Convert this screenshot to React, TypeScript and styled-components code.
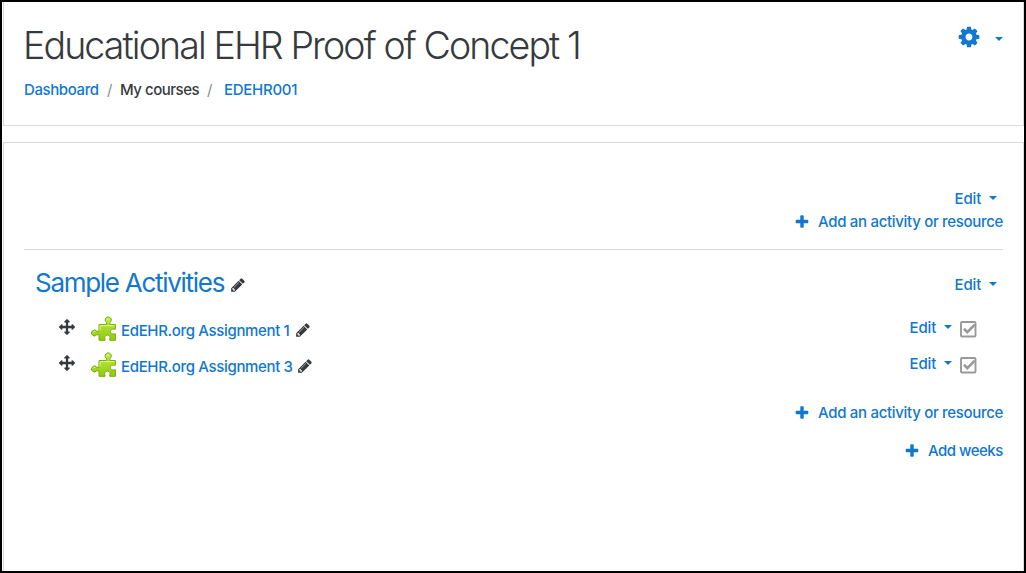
import React from "react";
import styled, { createGlobalStyle } from "styled-components";

const GlobalStyle = createGlobalStyle`
  * { box-sizing: border-box; }
  html, body { margin: 0; padding: 0; background: #fff; }
  body {
    font-family: Inter, "Liberation Sans", sans-serif;
    font-size: 15px;
    line-height: 22px;
    color: #373a3c;
    overflow: hidden;
  }
`;

const BLUE = "#1177d1";

const Frame = styled.div`
  width: 1026px;
  height: 573px;
  border: 2px solid #000;
  padding: 0 0 0 1px;
  display: flex;
  flex-direction: column;
  gap: 16px;
  overflow: hidden;
`;

const HeaderCard = styled.header`
  height: 124px;
  flex: none;
  border: 1px solid #dadada;
  border-top: 0;
  padding: 21px 20px 0 20px;
  display: flex;
  justify-content: space-between;
`;

const ContentCard = styled.main`
  flex: 1;
  border: 1px solid #dadada;
  border-bottom: 0;
  padding: 45px 20px 0 20px;
`;

const Title = styled.h1`
  margin: 0 0 0 -1px;
  padding-top: 1px;
  font-size: 37.5px;
  line-height: 44px;
  font-weight: 350;
  letter-spacing: -1.88px;
  white-space: nowrap;
`;

const Crumbs = styled.nav`
  display: flex;
  margin-top: 11px;
  white-space: nowrap;
`;

const Text = styled.span<{ $width: number; $spacing?: number }>`
  display: block;
  flex: none;
  width: ${(p) => p.$width}px;
  letter-spacing: ${(p) => p.$spacing ?? -0.28}px;
  font-weight: 450;
  white-space: nowrap;
`;

const Link = styled(Text).attrs({ as: "a" })`
  color: ${BLUE};
  font-weight: 500;
`;

const Slash = styled.span<{ $after: number }>`
  color: #868e96;
  width: 5px;
  margin: 0 ${(p) => p.$after}px 0 8px;
`;

const Settings = styled.div`
  display: flex;
  align-items: center;
  height: 28px;
  gap: 14px;
  color: ${BLUE};
`;

const Caret = styled.i<{ $shift?: number }>`
  width: 0;
  height: 0;
  margin-top: ${(p) => p.$shift ?? -2}px;
  border: 4px solid transparent;
  border-top-color: ${BLUE};
  border-bottom: 0;
`;

const Row = styled.div<{ $height: number; $right?: number }>`
  display: flex;
  align-items: center;
  justify-content: flex-end;
  height: ${(p) => p.$height}px;
  padding-right: ${(p) => p.$right ?? 0}px;
`;

const EditButton = styled.div`
  display: flex;
  align-items: center;
  gap: 8px;
`;

const AddButton = styled.div`
  display: flex;
  align-items: center;
  gap: 8px;
  color: ${BLUE};
`;

const Section = styled.section`
  border-top: 1px solid #dadada;
  margin-top: 15px;
  padding-top: 15px;
`;

const SectionHeader = styled.div`
  display: flex;
  justify-content: space-between;
  height: 36px;
  padding: 0 6px 0 11px;
`;

const SectionEdit = styled.div`
  display: flex;
  padding-top: 3px;
`;

const Heading = styled.div`
  display: flex;
  align-items: center;
  color: #373a3c;
`;

const SectionTitle = styled.h3`
  margin: 0;
  width: 195px;
  color: ${BLUE};
  font-size: 26px;
  line-height: 32px;
  font-weight: 400;
  letter-spacing: -1.28px;
  white-space: nowrap;
`;

const Activities = styled.div`
  padding: 10px 27px 0 35px;
`;

const Activity = styled.div`
  display: flex;
  align-items: center;
  height: 36px;
`;

const ActivityName = styled.div`
  display: flex;
  align-items: center;
  flex: 1;
  gap: 4px;
  padding: 4px 0 0 4px;
`;

const ActivityIcon = styled.div`
  margin: -1px 0 0 16px;
`;

const ActivityActions = styled.div`
  display: flex;
  align-items: center;
  gap: 8px;
  margin: -2px -1px 0 0;
`;

const Completion = styled.div`
  display: flex;
  padding-top: 2px;
`;

const Svg = styled.svg<{ $shift?: number }>`
  display: block;
  flex: none;
  margin-top: ${(p) => p.$shift ?? 0}px;
`;

const PATHS = {
  cog: "M1152 896q0-106-75-181t-181-75-181 75-75 181 75 181 181 75 181-75 75-181zm512-109v222q0 12-8 23t-20 13l-185 28q-19 54-39 91 35 50 107 138 10 12 10 25t-9 23q-27 37-99 108t-94 71q-12 0-26-9l-138-108q-44 23-91 38-16 136-29 186-7 28-36 28h-222q-14 0-24.5-8.5t-11.5-21.5l-28-184q-49-16-90-37l-141 107q-10 9-25 9-14 0-25-11-126-114-165-168-7-10-7-23 0-12 8-23 15-21 51-66.5t54-70.5q-27-50-41-99l-183-27q-13-2-21-12.5t-8-23.5v-222q0-12 8-23t19-13l186-28q14-46 39-92-40-57-107-138-10-12-10-24 0-10 9-23 26-36 98.5-107.5t94.5-71.5q13 0 26 10l138 107q44-23 91-38 16-136 29-186 7-28 36-28h222q14 0 24.5 8.5t11.5 21.5l28 184q49 16 90 37l142-107q9-9 24-9 13 0 25 10 129 119 165 170 7 8 7 22 0 12-8 23-15 21-51 66.5t-54 70.5q26 50 41 98l183 28q13 2 21 12.5t8 23.5z",
  pencil:
    "M491 1536l91-91-235-235-91 91v107h128v128h107zm523-928q0-22-22-22-10 0-17 7l-542 542q-7 7-7 17 0 22 22 22 10 0 17-7l542-542q7-7 7-17zm-54-192l416 416-832 832h-416v-416zm683 96q0 53-37 90l-166 166-416-416 166-165q36-38 90-38 53 0 91 38l235 234q37 39 37 91z",
  move: "M1792 896q0 26-19 45l-256 256q-19 19-45 19t-45-19-19-45v-128h-384v384h128q26 0 45 19t19 45-19 45l-256 256q-19 19-45 19t-45-19l-256-256q-19-19-19-45t19-45 45-19h128v-384h-384v128q0 26-19 45t-45 19-45-19l-256-256q-19-19-19-45t19-45l256-256q19-19 45-19t45 19 19 45v128h384v-384h-128q-26 0-45-19t-19-45 19-45l256-256q19-19 45-19t45 19l256 256q19 19 19 45t-19 45-45 19h-128v384h384v-128q0-26 19-45t45-19 45 19l256 256q19 19 19 45z",
  plus: "M1600 736v192q0 40-28 68t-68 28h-416v416q0 40-28 68t-68 28h-192q-40 0-68-28t-28-68v-416h-416q-40 0-68-28t-28-68v-192q0-40 28-68t68-28h416v-416q0-40 28-68t68-28h192q40 0 68 28t28 68v416h416q40 0 68 28t28 68z",
};

function Icon({ name, size = 16, shift }: { name: keyof typeof PATHS; size?: number; shift?: number }) {
  return (
    <Svg width={size} height={size} viewBox="0 0 1792 1792" fill="currentColor" $shift={shift}>
      <path d={PATHS[name]} />
    </Svg>
  );
}

function Puzzle() {
  return (
    <Svg width="26" height="26" viewBox="0 0 26 26">
      <defs>
        <linearGradient id="leaf" x1="0" y1="0" x2="0" y2="1">
          <stop offset="0" stopColor="#c3ea4a" />
          <stop offset="1" stopColor="#8fcb0c" />
        </linearGradient>
      </defs>
      <path
        d="M8 8.5H15.6V6.6A3.1 3.1 0 1 1 18.9 6.6V8.5H24.4V13.2H23.2A2.6 2.6 0 1 0 23.2 17.8H24.4V24.3H18.8V23A2.7 2.7 0 1 0 14 23V24.3H8V18.7H5.8A2.9 2.9 0 1 1 5.8 15.3H8Z"
        fill="url(#leaf)"
        stroke="#78ad0d"
        strokeWidth="1"
      />
      <path d="M9.1 14.5V9.6H23.4M15.6 4.2A1.6 1.6 0 0 1 18.6 3.6M2 16.6A1.7 1.7 0 0 1 4.4 15.6" fill="none" stroke="#def58f" />
    </Svg>
  );
}

function Tick() {
  return (
    <Svg width="17" height="17" viewBox="0 0 17 17" fill="none" stroke="#999">
      <rect x="1" y="1" width="14.5" height="14.5" rx="1" strokeWidth="1.9" />
      <path d="M4 7.8L7.3 11.1L14.8 3.6" strokeWidth="2.7" />
    </Svg>
  );
}

function Edit() {
  return (
    <EditButton>
      <Link $width={26.5} $spacing={-0.15}>
        Edit
      </Link>
      <Caret />
    </EditButton>
  );
}

function Add({ label, width, spacing = -0.31 }: { label: string; width: number; spacing?: number }) {
  return (
    <AddButton>
      <Icon name="plus" shift={-1} />
      <Link $width={width} $spacing={spacing}>
        {label}
      </Link>
    </AddButton>
  );
}

function ActivityRow({ label, width }: { label: string; width: number }) {
  return (
    <Activity>
      <Icon name="move" shift={-4} />
      <ActivityIcon>
        <Puzzle />
      </ActivityIcon>
      <ActivityName>
        <Link $width={width} $spacing={-0.34}>
          {label}
        </Link>
        <Icon name="pencil" shift={-3} />
      </ActivityName>
      <ActivityActions>
        <Edit />
        <Completion>
          <Tick />
        </Completion>
      </ActivityActions>
    </Activity>
  );
}

export default function App() {
  return (
    <>
      <GlobalStyle />
      <Frame>
        <HeaderCard>
          <div>
            <Title>Educational EHR Proof of Concept 1</Title>
            <Crumbs>
              <Link $width={75} $spacing={-0.4}>
                Dashboard
              </Link>
              <Slash $after={8}>/</Slash>
              <Text $width={79} $spacing={-0.48}>
                My courses
              </Text>
              <Slash $after={12}>/</Slash>
              <Link $width={75}>EDEHR001</Link>
            </Crumbs>
          </div>
          <Settings>
            <Icon name="cog" size={24} />
            <Caret $shift={4} />
          </Settings>
        </HeaderCard>
        <ContentCard>
          <Row $height={22} $right={6}>
            <Edit />
          </Row>
          <Row $height={24}>
            <Add label="Add an activity or resource" width={185} />
          </Row>
          <Section>
            <SectionHeader>
              <Heading>
                <SectionTitle>Sample Activities</SectionTitle>
                <Icon name="pencil" shift={4} />
              </Heading>
              <SectionEdit>
                <Edit />
              </SectionEdit>
            </SectionHeader>
            <Activities>
              <ActivityRow label="EdEHR.org Assignment 1" width={170} />
              <ActivityRow label="EdEHR.org Assignment 3" width={172} />
            </Activities>
            <Row $height={60}>
              <Add label="Add an activity or resource" width={185} />
            </Row>
            <Row $height={16}>
              <Add label="Add weeks" width={75} spacing={-0.5} />
            </Row>
          </Section>
        </ContentCard>
      </Frame>
    </>
  );
}
